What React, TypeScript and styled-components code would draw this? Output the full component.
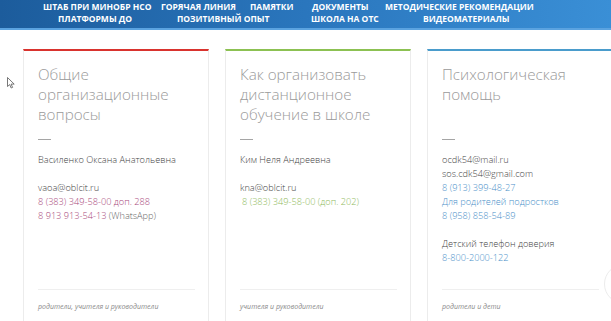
import styled, { createGlobalStyle } from 'styled-components';

const GlobalStyle = createGlobalStyle`
  html, body {
    margin: 0;
    padding: 0;
    background: #fff;
    overflow: hidden;
  }
  body {
    font-family: 'Open Sans', 'Liberation Sans', sans-serif;
    width: 611px;
    height: 321px;
  }
`;

const Page = styled.div`
  position: relative;
  width: 611px;
  height: 321px;
  overflow: hidden;
`;

const Nav = styled.nav`
  height: 27px;
  padding-top: 1px;
  background: linear-gradient(90deg, #1c5c9c 0%, #2a76bd 50%, #3a8fd6 100%);
  border-bottom: 2px solid #5ba3e0;
  box-sizing: content-box;
`;

const NavRow = styled.div<{ $start: number; $cols: string }>`
  display: grid;
  grid-template-columns: ${(p) => p.$cols};
  padding-left: ${(p) => p.$start}px;
  height: 12px;
  line-height: 12px;
`;

const NavLink = styled.a`
  color: #fff;
  font-size: 8.5px;
  font-weight: 700;
  text-transform: uppercase;
  text-decoration: none;
  white-space: nowrap;
`;

const Cards = styled.div`
  display: flex;
  gap: 16px;
  padding: 19px 0 0 23px;
`;

const Card = styled.div<{ $accent: string }>`
  flex: 0 0 186px;
  box-sizing: border-box;
  height: 300px;
  border: 1px solid #ececec;
  border-top: 2px solid ${(p) => p.$accent};
  padding: 13px 13px 0 14px;
`;

const Title = styled.h3`
  margin: 0;
  min-height: 60px;
  font-size: 15.2px;
  line-height: 20px;
  font-weight: 300;
  color: #9a9a9a;
`;

const Dash = styled.div`
  width: 13px;
  height: 1px;
  margin-top: 15px;
  background: #a5a5a5;
`;

const Body = styled.div`
  margin-top: 13px;
  height: 136px;
  font-size: 9.2px;
  line-height: 14px;
  font-weight: 300;
  color: #444;
`;

const Line = styled.div<{ $color?: string; $indent?: number }>`
  color: ${(p) => p.$color || '#444'};
  padding-left: ${(p) => p.$indent || 0}px;
  white-space: nowrap;
`;

const Gap = styled.div`
  height: 14px;
`;

const Note = styled.span`
  color: #666;
`;

const Divider = styled.div`
  height: 1px;
  background: #efefef;
`;

const Footer = styled.div`
  margin-top: 11px;
  font-size: 7px;
  line-height: 12px;
  font-style: italic;
  color: #8a8a8a;
`;

const Cursor = styled.svg`
  position: absolute;
  left: 7px;
  top: 77px;
`;

const TopButton = styled.div`
  position: absolute;
  left: 604px;
  top: 264px;
  width: 38px;
  height: 38px;
  border-radius: 50%;
  border: 1px solid #ececec;
  background: #fff;
`;

const red = '#a8477a';
const green = '#8fba5e';
const blue = '#4b90c9';

const App = () => {
  return (
    <Page>
      <GlobalStyle />
      <Nav>
        <NavRow $start={43} $cols="118px 89px 62px 73px auto">
          <NavLink>Штаб при Минобр НСО</NavLink>
          <NavLink>Горячая линия</NavLink>
          <NavLink>Памятки</NavLink>
          <NavLink>Документы</NavLink>
          <NavLink>Методические рекомендации</NavLink>
        </NavRow>
        <NavRow $start={58} $cols="119px 134px 112px auto">
          <NavLink>Платформы ДО</NavLink>
          <NavLink>Позитивный опыт</NavLink>
          <NavLink>Школа на ОТС</NavLink>
          <NavLink>Видеоматериалы</NavLink>
        </NavRow>
      </Nav>

      <Cards>
        <Card $accent="#d9332e">
          <Title>Общие организационные вопросы</Title>
          <Dash />
          <Body>
            <Line>Василенко Оксана Анатольевна</Line>
            <Gap />
            <Line>vaoa@oblcit.ru</Line>
            <Line $color={red}>8 (383) 349-58-00 доп. 288</Line>
            <Line $color={red}>
              8 913 913-54-13 <Note>(WhatsApp)</Note>
            </Line>
          </Body>
          <Divider />
          <Footer>родители, учителя и руководители</Footer>
        </Card>

        <Card $accent="#8cc152">
          <Title>Как организовать дистанционное обучение в школе</Title>
          <Dash />
          <Body>
            <Line>Ким Неля Андреевна</Line>
            <Gap />
            <Line>kna@oblcit.ru</Line>
            <Line $color={green} $indent={2}>8 (383) 349-58-00 (доп. 202)</Line>
          </Body>
          <Divider />
          <Footer>учителя и руководители</Footer>
        </Card>

        <Card $accent="#4a9ccc">
          <Title>Психологическая помощь</Title>
          <Dash />
          <Body>
            <Line>ocdk54@mail.ru</Line>
            <Line>sos.cdk54@gmail.com</Line>
            <Line $color={blue}>8 (913) 399-48-27</Line>
            <Line $color={blue}>Для родителей подростков</Line>
            <Line $color={blue}>8 (958) 858-54-89</Line>
            <Gap />
            <Line>Детский телефон доверия</Line>
            <Line $color={blue}>8-800-2000-122</Line>
          </Body>
          <Divider />
          <Footer>родители и дети</Footer>
        </Card>
      </Cards>

      <TopButton />
      <Cursor width="8" height="12" viewBox="0 0 8 12">
        <path d="M0.5 0.5 L0.5 9.5 L2.7 7.6 L4.2 11 L5.6 10.4 L4.1 7.1 L7.2 7.1 Z" fill="#fff" stroke="#555" strokeWidth="0.8" />
      </Cursor>
    </Page>
  );
};

export default App;
